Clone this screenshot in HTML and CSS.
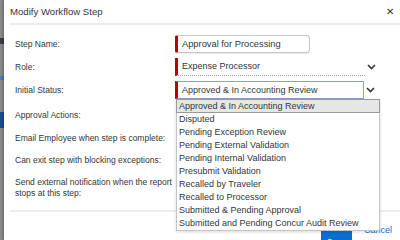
FILE: index.html
```html
<!DOCTYPE html>
<html lang="en">
<head>
    <meta charset="UTF-8">
    <meta name="viewport" content="width=device-width, initial-scale=1.0">
    <title>Modify Workflow Step</title>
    <link rel="stylesheet" href="styles.css">
</head>
<body>
    <div class="page-behind">
        <span class="behind-x"></span>
        <span class="behind-link"></span>
        <span class="behind-tab"></span>
    </div>

    <div class="dialog">
        <div class="dialog-header">
            <h2>Modify Workflow Step</h2>
            <span class="close-btn">&#x2715;</span>
        </div>

        <div class="form">
            <div class="row">
                <label>Step Name:</label>
                <div class="field">
                    <div class="text-input required">Approval for Processing</div>
                </div>
            </div>
            <div class="row">
                <label>Role:</label>
                <div class="field">
                    <div class="select plain required">Expense Processor</div>
                    <svg class="chevron" width="9" height="6" viewBox="0 0 9 6"><path d="M1 1 L4.5 4.5 L8 1" fill="none" stroke="#32363a" stroke-width="1.6"/></svg>
                </div>
            </div>
            <div class="row">
                <label>Initial Status:</label>
                <div class="field">
                    <div class="select boxed required">Approved &amp; In Accounting Review</div>
                    <svg class="chevron" width="9" height="6" viewBox="0 0 9 6"><path d="M1 1 L4.5 4.5 L8 1" fill="none" stroke="#32363a" stroke-width="1.6"/></svg>

                    <ul class="listbox">
                        <li class="selected">Approved &amp; In Accounting Review</li>
                        <li>Disputed</li>
                        <li>Pending Exception Review</li>
                        <li>Pending External Validation</li>
                        <li>Pending Internal Validation</li>
                        <li>Presubmit Validation</li>
                        <li>Recalled by Traveler</li>
                        <li>Recalled to Processor</li>
                        <li>Submitted &amp; Pending Approval</li>
                        <li>Submitted and Pending Concur Audit Review</li>
                    </ul>
                </div>
            </div>
            <div class="row gap-above">
                <label>Approval Actions:</label>
            </div>
            <div class="row">
                <label>Email Employee when step is complete:</label>
            </div>
            <div class="row short">
                <label>Can exit step with blocking exceptions:</label>
            </div>
            <div class="row tall">
                <label>Send external notification when the report<br>stops at this step:</label>
            </div>
        </div>

        <div class="dialog-footer">
            <button class="save-btn">Save</button>
            <span class="cancel-link">Cancel</span>
        </div>
    </div>
</body>
</html>
```

FILE: styles.css
```css
html {
    overflow: hidden;
}

body {
    margin: 0;
    width: 400px;
    height: 240px;
    overflow: hidden;
    display: flex;
    background-color: #8c8c8c;
    font-family: "Liberation Sans", Arial, sans-serif;
    color: #32363a;
}

.page-behind {
    width: 4px;
    flex-shrink: 0;
    display: flex;
    flex-direction: column;
}

.behind-x {
    height: 6px;
    margin-top: 38px;
    background: #3a3f44;
}

.behind-link {
    height: 4px;
    margin-top: 32px;
    background: #4f7fbf;
}

.behind-tab {
    height: 16px;
    margin-top: 32px;
    background: #1f4f8f;
}

.dialog {
    flex: 1;
    height: 240px;
    overflow: hidden;
    background: #fff;
    box-shadow: -1px 0 3px rgba(0, 0, 0, 0.3);
    display: flex;
    flex-direction: column;
}

.dialog-header {
    height: 25px;
    flex-shrink: 0;
    margin-left: 6px;
    border-bottom: 2px solid #ededed;
    display: flex;
    align-items: center;
    justify-content: space-between;
    box-sizing: border-box;
}

.dialog-header h2 {
    margin: 0;
    font-size: 9.6px;
    font-weight: normal;
    color: #32363a;
}

.close-btn {
    font-size: 10px;
    color: #32363a;
    margin-right: 6px;
}

.form {
    padding: 7px 0 0 5px;
    height: 187px;
    flex-shrink: 0;
    box-sizing: border-box;
    border-bottom: 2px solid #ededed;
    margin-left: 6px;
}

.row {
    display: grid;
    grid-template-columns: 160px 1fr;
    align-items: center;
    height: 23px;
    font-size: 8.5px;
}

.row.gap-above {
    margin-top: 2px;
}

.row.short {
    height: 22px;
}

.row.tall {
    height: 34px;
    line-height: 11px;
}

.row label {
    color: #32363a;
}

.field {
    position: relative;
    display: flex;
    align-items: center;
    height: 18px;
}

.required {
    border-left: 3px solid #bb0000 !important;
    box-sizing: border-box;
}

.text-input {
    width: 135px;
    height: 18px;
    border: 1px solid #c6c6c6;
    border-radius: 2px 4px 4px 2px;
    box-shadow: 0 1px 1px rgba(0, 0, 0, 0.08);
    padding-left: 4px;
    line-height: 16px;
    font-size: 9.3px;
}

.select {
    height: 18px;
    padding-left: 4px;
    line-height: 17px;
    font-size: 9px;
}

.select.plain {
    width: 190px;
    border-bottom: 1px dotted #a0a0a0;
}

.select.boxed {
    width: 189px;
    border: 1px solid #8a9fc6;
    line-height: 16px;
}

.chevron {
    margin-left: 2px;
}

.listbox {
    position: absolute;
    left: 1px;
    top: 18px;
    width: 202px;
    margin: 0;
    padding: 0;
    list-style: none;
    background: #fff;
    border: 1px solid #c4c4c4;
    box-shadow: 0 1px 3px rgba(0, 0, 0, 0.15);
    z-index: 5;
}

.listbox li {
    height: 13px;
    line-height: 13px;
    padding-left: 2px;
    font-size: 9px;
    color: #32363a;
}

.listbox li.selected {
    background: #e6e6e6;
    border: 1px solid #9a9a9a;
    height: 12px;
    line-height: 12px;
    margin-top: -1px;
    margin-left: -1px;
    margin-right: -1px;
}

.dialog-footer {
    display: flex;
    align-items: flex-start;
    justify-content: flex-end;
    padding: 12px 8px 0 0;
    gap: 12px;
}

.save-btn {
    flex-shrink: 0;
    background-color: #0a6ed1;
    color: #fff;
    border: none;
    border-radius: 4px;
    width: 31px;
    height: 36px;
    font-size: 8.5px;
    font-family: inherit;
    padding: 0;
}

.cancel-link {
    color: #0a6ed1;
    font-size: 9px;
    margin-top: 1px;
}
```
